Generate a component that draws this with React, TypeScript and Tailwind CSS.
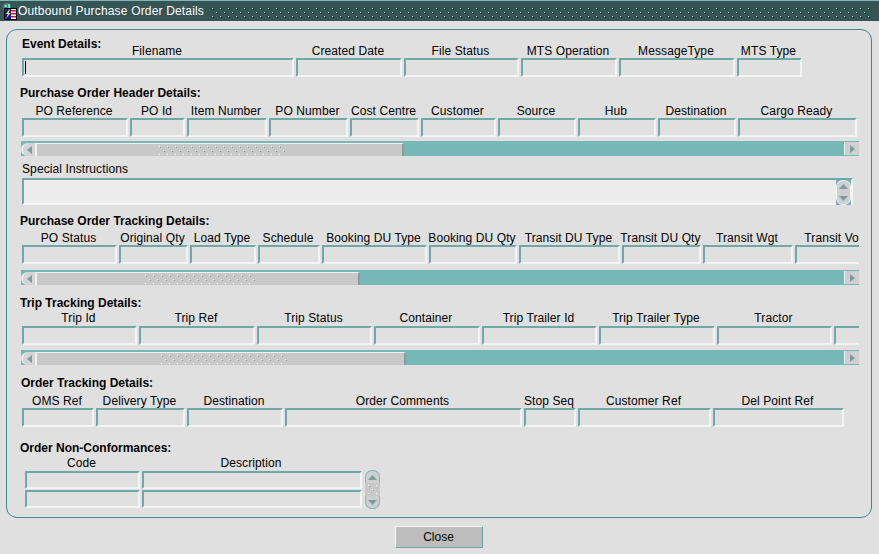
import React from 'react';

type FieldDef = { label: string; w: number };

const eventFields: FieldDef[] = [
  { label: 'Filename', w: 272 },
  { label: 'Created Date', w: 106 },
  { label: 'File Status', w: 115 },
  { label: 'MTS Operation', w: 96 },
  { label: 'MessageType', w: 116 },
  { label: 'MTS Type', w: 65 },
];

const headerFields: FieldDef[] = [
  { label: 'PO Reference', w: 106 },
  { label: 'PO Id', w: 55 },
  { label: 'Item Number', w: 80 },
  { label: 'PO Number', w: 79 },
  { label: 'Cost Centre', w: 69 },
  { label: 'Customer', w: 75 },
  { label: 'Source', w: 78 },
  { label: 'Hub', w: 78 },
  { label: 'Destination', w: 78 },
  { label: 'Cargo Ready', w: 119 },
  { label: '', w: 40 },
];

const poTrackingFields: FieldDef[] = [
  { label: 'PO Status', w: 95 },
  { label: 'Original Qty', w: 69 },
  { label: 'Load Type', w: 66 },
  { label: 'Schedule', w: 62 },
  { label: 'Booking DU Type', w: 105 },
  { label: 'Booking DU Qty', w: 88 },
  { label: 'Transit DU Type', w: 101 },
  { label: 'Transit DU Qty', w: 79 },
  { label: 'Transit Wgt', w: 90 },
  { label: 'Transit Vol', w: 78 },
];

const tripFields: FieldDef[] = [
  { label: 'Trip Id', w: 115 },
  { label: 'Trip Ref', w: 116 },
  { label: 'Trip Status', w: 115 },
  { label: 'Container', w: 106 },
  { label: 'Trip Trailer Id', w: 115 },
  { label: 'Trip Trailer Type', w: 116 },
  { label: 'Tractor', w: 115 },
  { label: '', w: 60 },
];

const orderFields: FieldDef[] = [
  { label: 'OMS Ref', w: 72 },
  { label: 'Delivery Type', w: 89 },
  { label: 'Destination', w: 96 },
  { label: 'Order Comments', w: 237 },
  { label: 'Stop Seq', w: 52 },
  { label: 'Customer Ref', w: 133 },
  { label: 'Del Point Ref', w: 131 },
];

// little raised dots used on the title bar and scrollbar thumbs
function Grip({ w, h, light, dark }: { w: number; h: number; light: string; dark: string }) {
  const id = `grip-${light.slice(1)}-${w}`;
  return (
    <svg width={w} height={h} className="block">
      <defs>
        <pattern id={id} width="8" height="8" patternUnits="userSpaceOnUse">
          <rect x="0" y="0" width="1" height="1" fill={light} />
          <rect x="1" y="1" width="1" height="1" fill={dark} />
          <rect x="4" y="4" width="1" height="1" fill={light} />
          <rect x="5" y="5" width="1" height="1" fill={dark} />
        </pattern>
      </defs>
      <rect width={w} height={h} fill={`url(#${id})`} />
    </svg>
  );
}

function Input({ w, h = 19, caret }: { w: number; h?: number; caret?: boolean }) {
  return (
    <div
      className="shrink-0 bg-[#e0e0e0] border-2 border-t-[#6fa8a6] border-l-[#6fa8a6] border-b-[#f4f4f4] border-r-[#f4f4f4] rounded-[1px] flex items-center"
      style={{ width: w - 2, height: h }}
    >
      {caret && <div className="w-px h-[13px] ml-px bg-black" />}
    </div>
  );
}

function FieldRow({ fields, first, tight }: { fields: FieldDef[]; first?: boolean; tight?: boolean }) {
  return (
    <div className="flex gap-[2px] ml-[15px] w-[837px] overflow-hidden">
      {fields.map((f, i) => (
        <div key={i} className="shrink-0" style={{ width: f.w }}>
          <div className={`h-[15px] pr-[2px] flex justify-center whitespace-nowrap tracking-[0.1px] ${tight ? 'leading-[14px]' : 'leading-[16px]'}`}>
            {f.label}
          </div>
          <Input w={f.w + 2} caret={first && i === 0} />
        </div>
      ))}
    </div>
  );
}

function Heading({ children, indent = 'ml-[13px]' }: { children: string; indent?: string }) {
  return <div className={`h-[14px] leading-[17px] font-bold ${indent}`}>{children}</div>;
}

function Arrow({ dir }: { dir: 'left' | 'right' | 'up' | 'down' }) {
  const pts = { left: '6,1 6,9 1,5', right: '1,1 1,9 6,5', up: '0,6 9,6 4.5,1', down: '0,1 9,1 4.5,6' }[dir];
  const vertical = dir === 'up' || dir === 'down';
  return (
    <svg width={vertical ? 9 : 7} height={vertical ? 7 : 10} className="block">
      <polygon points={pts} fill="#7f9c9c" />
    </svg>
  );
}

function HScroll({ thumb, gripAt, gripW }: { thumb: number; gripAt: number; gripW: number }) {
  return (
    <div className="ml-[14px] w-[838px] h-[15px] flex bg-[#76b8b8] items-stretch">
      <div className="flex pt-[2px] relative" style={{ width: thumb }}>
        <div className="w-[14px] flex items-center justify-center bg-[#d4d4d4] rounded-l-[7px] border-l-2 border-[#f0f0f0]">
          <Arrow dir="left" />
        </div>
        <div className="flex-1 bg-[#c8c8c8] border-l-2 border-[#f0f0f0] border-r-2 border-r-[#8a9c9c] border-t border-t-[#f0f0f0] flex items-center">
          <div style={{ marginLeft: gripAt }}>
            <Grip w={gripW} h={9} light="#f4f4f4" dark="#8f9f9f" />
          </div>
        </div>
      </div>
      <div className="flex-1" />
      <div className="w-[15px] my-px bg-[#cfcfcf] border-l border-[#f0f0f0] flex items-center justify-center">
        <Arrow dir="right" />
      </div>
    </div>
  );
}

function SpinButton({ dir }: { dir: 'up' | 'down' }) {
  return (
    <div
      className={`w-[15px] h-[13px] bg-[#cfcfcf] flex items-center justify-center border border-[#7fbcbc] ${
        dir === 'up' ? 'rounded-t-[7px] border-b-0' : 'rounded-b-[7px] border-t-0'
      }`}
    >
      <Arrow dir={dir} />
    </div>
  );
}

function TitleIcon() {
  return (
    <svg width="16" height="18" viewBox="0 0 16 18" className="block shrink-0">
      <circle cx="6" cy="5" r="4" fill="#2f8f8f" />
      <path d="M3 3h3v2H4zM7 2h2v4H7z" fill="#8fd0a0" />
      <rect x="3.5" y="6.5" width="12" height="11" fill="#fff" stroke="#000" />
      <rect x="4" y="7" width="6" height="10" fill="#1818a8" />
      <rect x="10" y="8" width="5" height="1.5" fill="#d01818" />
      <rect x="10" y="11" width="5" height="1.5" fill="#d01818" />
      <rect x="10" y="14" width="5" height="1.5" fill="#d01818" />
      <path d="M8 7.5 5 12h2l-2 4.5L9.5 11H7.5l1.5-3.5z" fill="#ffe030" />
    </svg>
  );
}

export default function App() {
  return (
    <div className="w-[879px] h-[554px] overflow-hidden bg-[#e0e0e0] text-black text-[12px] font-['Liberation_Sans',Arial,sans-serif]">
      {/* Title bar */}
      <div className="h-[21px] bg-[#365454] border-t border-[#7fb5b5] flex items-center pl-[1px] overflow-hidden">
        <TitleIcon />
        <span className="ml-px text-white tracking-[0.17px] whitespace-nowrap">Outbound Purchase Order Details</span>
        <div className="ml-[8px] mt-[4px]">
          <Grip w={660} h={10} light="#8fd0d0" dark="#0e2020" />
        </div>
      </div>

      {/* Main panel */}
      <div className="mt-[8px] ml-[6px] w-[866px] h-[489px] border border-[#3f8a8a] rounded-[11px] pt-[6px]">
        <Heading indent="ml-[15px]">Event Details:</Heading>
        <div className="-mt-[7px]">
          <FieldRow fields={eventFields} first />
        </div>

        <div className="mt-[8px]">
          <Heading>Purchase Order Header Details:</Heading>
        </div>
        <div className="mt-[4px]">
          <FieldRow fields={headerFields} />
        </div>
        <div className="mt-[4px]">
          <HScroll thumb={383} gripAt={122} gripW={126} />
        </div>

        <div className="mt-[6px] ml-[15px] h-[14px] leading-[14px] tracking-[0.1px]">Special Instructions</div>
        <div className="mt-[2px] ml-[15px] w-[831px] h-[27px] bg-[#ececec] border-2 border-t-[#6fa8a6] border-l-[#6fa8a6] border-b-[#f4f4f4] border-r-[#f4f4f4] flex justify-end">
          <div className="w-[15px] h-[25px] bg-[#76b8b8]">
            <div className="h-[25px] rounded-[7px] border border-[#f4f4f4] bg-[#cfcfcf] flex flex-col items-center justify-around">
              <Arrow dir="up" />
              <Arrow dir="down" />
            </div>
          </div>
        </div>

        <div className="mt-[8px]">
          <Heading>Purchase Order Tracking Details:</Heading>
        </div>
        <div className="mt-[3px]">
          <FieldRow fields={poTrackingFields} />
        </div>
        <div className="mt-[6px]">
          <HScroll thumb={339} gripAt={108} gripW={110} />
        </div>

        <div className="mt-[10px]">
          <Heading>Trip Tracking Details:</Heading>
        </div>
        <div className="mt-[2px]">
          <FieldRow fields={tripFields} tight />
        </div>
        <div className="mt-[5px]">
          <HScroll thumb={385} gripAt={124} gripW={126} />
        </div>

        <div className="mt-[10px]">
          <Heading indent="ml-[14px]">Order Tracking Details:</Heading>
        </div>
        <div className="mt-[4px]">
          <FieldRow fields={orderFields} />
        </div>

        <div className="mt-[13px]">
          <Heading>Order Non-Conformances:</Heading>
        </div>
        <div className="mt-[2px] ml-[18px] flex">
          <div>
            <div className="flex gap-[2px] h-[15px] leading-[14px] tracking-[0.1px] text-center">
              <div className="w-[115px] pr-[2px]">Code</div>
              <div className="w-[220px] pr-[2px]">Description</div>
            </div>
            <div className="flex gap-[2px]">
              <Input w={117} h={18} />
              <Input w={222} h={18} />
            </div>
            <div className="flex gap-[2px] mt-px">
              <Input w={117} h={18} />
              <Input w={222} h={18} />
            </div>
          </div>
          <div className="ml-[3px] mt-[14px] flex flex-col justify-between h-[39px] bg-[#c8c8c8] w-[15px] rounded-[7px]">
            <SpinButton dir="up" />
            <div className="flex justify-center">
              <Grip w={9} h={9} light="#f8f8f8" dark="#8f9f9f" />
            </div>
            <SpinButton dir="down" />
          </div>
        </div>
      </div>

      {/* Footer */}
      <div className="mt-[8px] flex justify-center pr-[2px]">
        <button className="w-[88px] h-[22px] bg-[#bdbdbd] border border-t-[#f8f8f8] border-l-[#f8f8f8] border-b-[#6f9f9f] border-r-[#6f9f9f] text-black rounded-[1px]">
          Close
        </button>
      </div>
    </div>
  );
}
